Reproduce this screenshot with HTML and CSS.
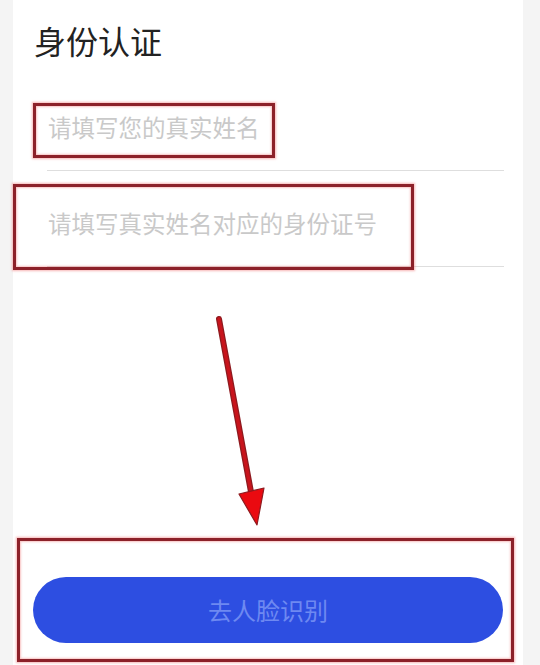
FILE: index.html
```html
<!DOCTYPE html>
<html lang="zh-CN">
<head>
<meta charset="utf-8">
<title>身份认证</title>
<link rel="stylesheet" href="styles.css">
</head>
<body>
<main class="card">
  <h1 class="title">身份认证</h1>
  <div class="field"><span class="placeholder">请填写您的真实姓名</span></div>
  <div class="field"><span class="placeholder">请填写真实姓名对应的身份证号</span></div>
  <button class="btn" type="button">去人脸识别</button>
</main>
<div class="marks">
  <div class="mark mark-name"></div>
  <div class="mark mark-id"></div>
  <div class="mark mark-btn"></div>
  <svg class="arrow" width="540" height="665" viewBox="0 0 540 665">
    <line x1="219" y1="319" x2="251" y2="492" stroke="#8e1a1f" stroke-width="6" stroke-linecap="round"/>
    <line x1="219" y1="319" x2="251" y2="492" stroke="#c8141c" stroke-width="3.5" stroke-linecap="round"/>
    <polygon points="239,494 264,488 257,525" fill="#ea0a10" stroke="#8e1a1f" stroke-width="1.2" stroke-linejoin="round"/>
  </svg>
</div>
</body>
</html>
```
FILE: styles.css
```css
html, body {
  margin: 0;
  padding: 0;
}
body {
  background: #f4f4f4;
  font-family: "Noto Sans CJK SC", "Noto Sans", sans-serif;
  position: relative;
  width: 540px;
  height: 665px;
  overflow: hidden;
}
.card {
  background: #ffffff;
  margin: 0 17px 0 13px;
  height: 665px;
  display: flex;
  flex-direction: column;
}
.title {
  margin: 20px 0 15px 21px;
  font-size: 32px;
  line-height: 40px;
  font-weight: 400;
  color: #222222;
}
.field {
  margin: 0 19px 0 34px;
  border-bottom: 1px solid #dedede;
  padding-top: 37px;
  height: 58px;
}
.placeholder {
  display: block;
  font-size: 23.5px;
  line-height: 30px;
  color: #c9c9c9;
  padding-left: 1px;
}
.btn {
  margin: 310px 0 0 20px;
  width: 470px;
  height: 66px;
  border: none;
  border-radius: 33px;
  background: #2d4ee1;
  color: #6e89f1;
  font-family: inherit;
  font-size: 24px;
  line-height: 66px;
  padding: 0;
}
.marks {
  position: absolute;
  left: 0;
  top: 0;
  width: 540px;
  height: 665px;
  pointer-events: none;
}
.mark {
  position: absolute;
  box-sizing: border-box;
  border: 3px solid #8c2129;
  box-shadow: 0 0 2px 1px rgba(240, 120, 120, 0.55), inset 0 0 2px 1px rgba(240, 120, 120, 0.45);
}
.mark-name {
  left: 33px;
  top: 103px;
  width: 242px;
  height: 55px;
}
.mark-id {
  left: 13px;
  top: 184px;
  width: 401px;
  height: 86px;
}
.mark-btn {
  left: 17px;
  top: 538px;
  width: 497px;
  height: 124px;
}
.arrow {
  position: absolute;
  left: 0;
  top: 0;
}
```
